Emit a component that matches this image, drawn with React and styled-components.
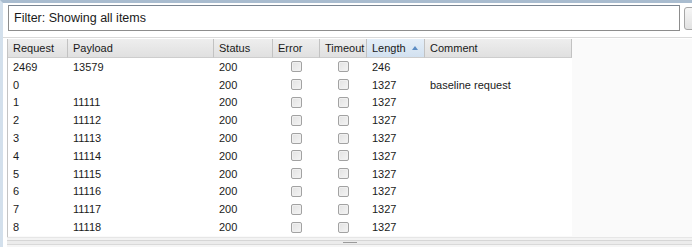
import React from 'react';
import styled, {createGlobalStyle} from 'styled-components';

const GlobalStyle = createGlobalStyle`
  html, body {
    margin: 0;
    padding: 0;
    background: #ffffff;
  }
  body {
    font-family: "Liberation Sans", Arial, sans-serif;
    font-size: 11px;
    color: #1a1a1a;
  }
`;

const columns = [
  {key: 'request', label: 'Request', width: 60, align: 'left'},
  {key: 'payload', label: 'Payload', width: 146, align: 'left'},
  {key: 'status', label: 'Status', width: 59, align: 'left'},
  {key: 'error', label: 'Error', width: 47, align: 'check'},
  {key: 'timeout', label: 'Timeout', width: 47, align: 'check'},
  {key: 'length', label: 'Length', width: 58, align: 'left', sorted: true},
  {key: 'comment', label: 'Comment', width: 147, align: 'left'},
];

const rows = [
  {request: '2469', payload: '13579', status: '200', length: '246', comment: ''},
  {request: '0', payload: '', status: '200', length: '1327', comment: 'baseline request'},
  {request: '1', payload: '11111', status: '200', length: '1327', comment: ''},
  {request: '2', payload: '11112', status: '200', length: '1327', comment: ''},
  {request: '3', payload: '11113', status: '200', length: '1327', comment: ''},
  {request: '4', payload: '11114', status: '200', length: '1327', comment: ''},
  {request: '5', payload: '11115', status: '200', length: '1327', comment: ''},
  {request: '6', payload: '11116', status: '200', length: '1327', comment: ''},
  {request: '7', payload: '11117', status: '200', length: '1327', comment: ''},
  {request: '8', payload: '11118', status: '200', length: '1327', comment: ''},
];

const Frame = styled.div`
  width: 692px;
  height: 247px;
  box-sizing: border-box;
  display: flex;
  flex-direction: column;
  overflow: hidden;
  border-top: 3px solid #a9bccf;
  border-left: 3px solid #d3e0ec;
  background: #ffffff;
`;

const FilterRow = styled.div`
  display: flex;
  align-items: flex-start;
  gap: 4px;
  padding: 2px 0 0 5px;
`;

const FilterBox = styled.div`
  width: 672px;
  height: 26px;
  flex: none;
  box-sizing: border-box;
  border: 1px solid #8d8d8d;
  border-top-color: #7a8592;
  background: #ffffff;
  display: flex;
  align-items: center;
  padding-left: 5px;
  font-size: 12.5px;
  color: #1a1a1a;
`;

const SideButton = styled.div`
  width: 20px;
  height: 23px;
  flex: none;
  margin-top: 2px;
  box-sizing: border-box;
  border: 1px solid #a6a6a6;
  border-radius: 3px;
  background: linear-gradient(#f6f6f6, #e2e2e2);
`;

const Rule = styled.div`
  margin-top: 6px;
  height: 1px;
  background: #dadada;
`;

const TableArea = styled.div`
  flex: 1;
  margin: 1px 0 0 4px;
  border-left: 1px solid #c4c4c4;
  background: #fafafa;
  display: flex;
  flex-direction: column;
  overflow: hidden;
`;

const Grid = styled.div`
  display: grid;
  grid-template-columns: ${p => p.$cols};
  width: max-content;
`;

const HeadCell = styled.div`
  height: 19px;
  box-sizing: border-box;
  display: flex;
  align-items: center;
  justify-content: space-between;
  padding: 0 6px 0 5px;
  border-right: 1px solid #c2c2c2;
  border-bottom: 1px solid #cdcdcd;
  background: ${p => p.$sorted
    ? 'linear-gradient(#e4eef8, #d2e1f0)'
    : 'linear-gradient(#eeeeee, #e0e0e0)'};
  color: #1a1a1a;
  white-space: nowrap;
`;

const SortArrow = styled.span`
  width: 0;
  height: 0;
  border-left: 3px solid transparent;
  border-right: 3px solid transparent;
  border-bottom: 4px solid #5b8cc4;
`;

const Cell = styled.div`
  height: 17.8px;
  display: flex;
  align-items: center;
  justify-content: ${p => (p.$check ? 'center' : 'flex-start')};
  padding-left: ${p => (p.$check ? '0' : '5px')};
  background: #ffffff;
  white-space: nowrap;
  overflow: hidden;
`;

const CheckBox = styled.span`
  width: 11px;
  height: 11px;
  box-sizing: border-box;
  border: 1px solid #a2a2a2;
  border-radius: 2px;
  background: linear-gradient(135deg, #e2e2e2, #f4f4f4);
  box-shadow: inset 0 0 0 1px #f0f0f0;
`;

const Splitter = styled.div`
  height: 10px;
  flex: none;
  margin-left: 4px;
  box-sizing: border-box;
  border-top: 1px solid #e6e6e6;
  display: flex;
  justify-content: center;
  background: linear-gradient(#f3f3f3 0, #f3f3f3 2px, #d6d6d6 2px, #d6d6d6 3px, #ececec 3px, #ececec 6px, #d9d9d9 6px, #d9d9d9 7px, #f5f5f5 7px);
`;

const Grip = styled.span`
  width: 14px;
  height: 1px;
  margin-top: 4px;
  background: #9a9a9a;
`;

export default function App() {
  const cols = columns.map(c => `${c.width}px`).join(' ');
  return (
    <>
      <GlobalStyle />
      <Frame>
        <FilterRow>
          <FilterBox>Filter: Showing all items</FilterBox>
          <SideButton />
        </FilterRow>
        <Rule />
        <TableArea>
          <Grid $cols={cols}>
            {columns.map(c => (
              <HeadCell key={c.key} $sorted={c.sorted}>
                {c.label}
                {c.sorted && <SortArrow />}
              </HeadCell>
            ))}
            {rows.map((r, i) =>
              columns.map(c => (
                <Cell key={`${i}-${c.key}`} $check={c.align === 'check'}>
                  {c.align === 'check' ? <CheckBox /> : r[c.key]}
                </Cell>
              ))
            )}
          </Grid>
        </TableArea>
        <Splitter>
          <Grip />
        </Splitter>
      </Frame>
    </>
  );
}
